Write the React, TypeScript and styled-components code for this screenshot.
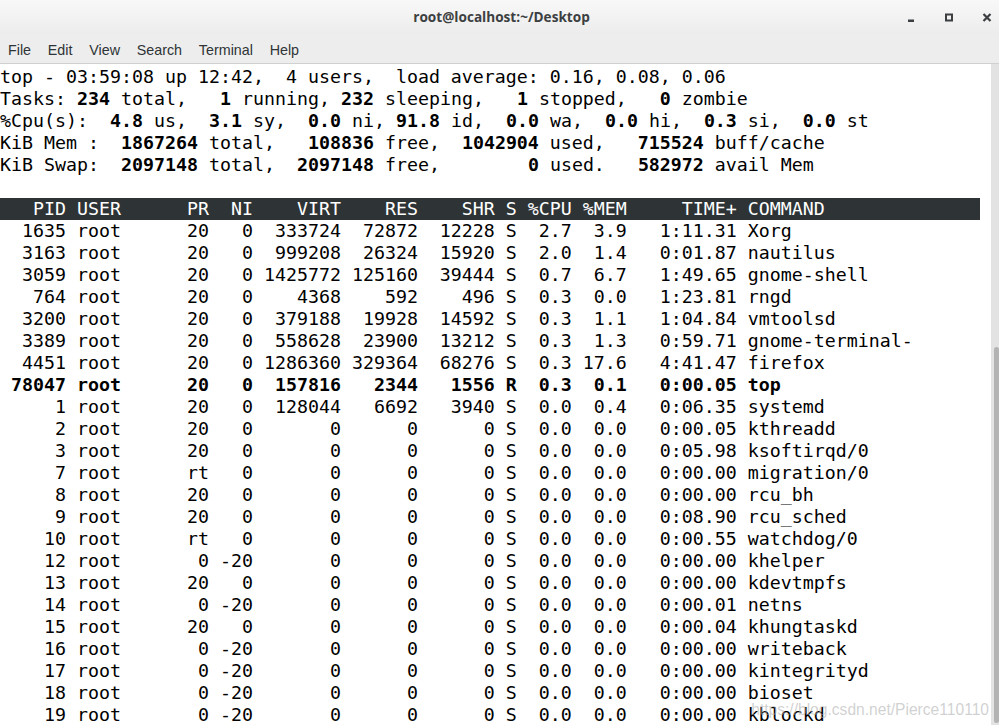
import * as React from "react";
import styled, { createGlobalStyle } from "styled-components";

const GlobalStyle = createGlobalStyle`
  html, body {
    margin: 0;
    padding: 0;
    background: #ffffff;
    overflow: hidden;
  }
`;

const Window = styled.div`
  position: relative;
  width: 999px;
  height: 725px;
  display: flex;
  flex-direction: column;
  overflow: hidden;
  background: #ffffff;
  font-family: "Open Sans", "DejaVu Sans", sans-serif;
`;

const TitleBar = styled.div`
  height: 35px;
  flex: none;
  display: grid;
  grid-template-columns: 1fr auto 1fr;
  align-items: center;
  padding-bottom: 2px;
  box-sizing: border-box;
  background: linear-gradient(#f8f8f8, #ececec);
`;

const Title = styled.div`
  grid-column: 2;
  font-size: 13.6px;
  font-weight: 700;
  color: #3c3f41;
  padding-left: 4px;
`;

const Controls = styled.div`
  grid-column: 3;
  justify-self: end;
  display: flex;
  align-items: center;
  gap: 24px;
  padding-right: 5px;
  padding-top: 2px;
`;

const ControlButton = styled.span`
  width: 14px;
  height: 14px;
  display: flex;
  color: #3c3f41;
`;

const MenuBar = styled.div`
  height: 29px;
  flex: none;
  display: flex;
  align-items: center;
  padding-top: 2px;
  box-sizing: border-box;
  background: #ededed;
  border-bottom: 1px solid #d0d0d0;
`;

const MenuItem = styled.span`
  padding: 0 8.4px;
  font-family: "Liberation Sans", Arial, sans-serif;
  font-size: 14.3px;
  color: #2e3436;
  &:first-child {
    padding-left: 8px;
  }
`;

const Terminal = styled.div`
  flex: 1;
  display: flex;
  min-height: 0;
`;

const Screen = styled.div`
  flex: 1;
  padding-top: 2px;
  font-family: "DejaVu Sans Mono", monospace;
  font-size: 18.27px;
  line-height: 22px;
  color: #000000;
`;

const Line = styled.div<{ $bold?: boolean; $inverse?: boolean }>`
  height: 22px;
  white-space: pre;
  font-weight: ${(p) => (p.$bold ? 700 : 400)};
  background: ${(p) => (p.$inverse ? "#2e3436" : "transparent")};
  color: ${(p) => (p.$inverse ? "#ffffff" : "inherit")};
  width: ${(p) => (p.$inverse ? "980px" : "auto")};
`;

const Strong = styled.b`
  font-weight: 700;
`;

const Trough = styled.div`
  width: 8px;
  flex: none;
  display: flex;
  flex-direction: column;
  justify-content: flex-end;
  padding-bottom: 2px;
  box-sizing: border-box;
  background: #e3e3e3;
`;

const Thumb = styled.div`
  height: 376px;
  width: 5px;
  margin-left: 3px;
  border-radius: 3px;
  background: #b3b3b3;
`;

const Watermark = styled.div`
  position: absolute;
  right: 10px;
  bottom: 6px;
  font-family: "Liberation Sans", Arial, sans-serif;
  font-size: 15.6px;
  color: rgba(170, 170, 170, 0.55);
  pointer-events: none;
`;

const menus = ["File", "Edit", "View", "Search", "Terminal", "Help"];

const summary = [
  "top - 03:59:08 up 12:42,  4 users,  load average: 0.16, 0.08, 0.06",
  "Tasks: **234** total,   **1** running, **232** sleeping,   **1** stopped,   **0** zombie",
  "%Cpu(s):  **4.8** us,  **3.1** sy,  **0.0** ni, **91.8** id,  **0.0** wa,  **0.0** hi,  **0.3** si,  **0.0** st",
  "KiB Mem :  **1867264** total,   **108836** free,  **1042904** used,   **715524** buff/cache",
  "KiB Swap:  **2097148** total,  **2097148** free,        **0** used.   **582972** avail Mem",
];

type Proc = [number, string, string, string, string, string, string, string, string, string, string];

const procs: Proc[] = [
  [1635, "20", "0", "333724", "72872", "12228", "S", "2.7", "3.9", "1:11.31", "Xorg"],
  [3163, "20", "0", "999208", "26324", "15920", "S", "2.0", "1.4", "0:01.87", "nautilus"],
  [3059, "20", "0", "1425772", "125160", "39444", "S", "0.7", "6.7", "1:49.65", "gnome-shell"],
  [764, "20", "0", "4368", "592", "496", "S", "0.3", "0.0", "1:23.81", "rngd"],
  [3200, "20", "0", "379188", "19928", "14592", "S", "0.3", "1.1", "1:04.84", "vmtoolsd"],
  [3389, "20", "0", "558628", "23900", "13212", "S", "0.3", "1.3", "0:59.71", "gnome-terminal-"],
  [4451, "20", "0", "1286360", "329364", "68276", "S", "0.3", "17.6", "4:41.47", "firefox"],
  [78047, "20", "0", "157816", "2344", "1556", "R", "0.3", "0.1", "0:00.05", "top"],
  [1, "20", "0", "128044", "6692", "3940", "S", "0.0", "0.4", "0:06.35", "systemd"],
  [2, "20", "0", "0", "0", "0", "S", "0.0", "0.0", "0:00.05", "kthreadd"],
  [3, "20", "0", "0", "0", "0", "S", "0.0", "0.0", "0:05.98", "ksoftirqd/0"],
  [7, "rt", "0", "0", "0", "0", "S", "0.0", "0.0", "0:00.00", "migration/0"],
  [8, "20", "0", "0", "0", "0", "S", "0.0", "0.0", "0:00.00", "rcu_bh"],
  [9, "20", "0", "0", "0", "0", "S", "0.0", "0.0", "0:08.90", "rcu_sched"],
  [10, "rt", "0", "0", "0", "0", "S", "0.0", "0.0", "0:00.55", "watchdog/0"],
  [12, "0", "-20", "0", "0", "0", "S", "0.0", "0.0", "0:00.00", "khelper"],
  [13, "20", "0", "0", "0", "0", "S", "0.0", "0.0", "0:00.00", "kdevtmpfs"],
  [14, "0", "-20", "0", "0", "0", "S", "0.0", "0.0", "0:00.01", "netns"],
  [15, "20", "0", "0", "0", "0", "S", "0.0", "0.0", "0:00.04", "khungtaskd"],
  [16, "0", "-20", "0", "0", "0", "S", "0.0", "0.0", "0:00.00", "writeback"],
  [17, "0", "-20", "0", "0", "0", "S", "0.0", "0.0", "0:00.00", "kintegrityd"],
  [18, "0", "-20", "0", "0", "0", "S", "0.0", "0.0", "0:00.00", "bioset"],
  [19, "0", "-20", "0", "0", "0", "S", "0.0", "0.0", "0:00.00", "kblockd"],
];

const r = (v: string | number, n: number) => String(v).padStart(n);

const row = (c: (string | number)[]) =>
  r(c[0], 6) + " " + String(c[1]).padEnd(8) + r(c[2], 4) + r(c[3], 4) + r(c[4], 8) +
  r(c[5], 7) + r(c[6], 7) + r(c[7], 2) + r(c[8], 5) + r(c[9], 5) + r(c[10], 10) + " " + c[11];

const header = row(["PID", "USER", "PR", "NI", "VIRT", "RES", "SHR", "S", "%CPU", "%MEM", "TIME+", "COMMAND"]).padEnd(89);

const Marked = ({ text }: { text: string }) => (
  <>
    {text.split("**").map((part, i) => (i % 2 ? <Strong key={i}>{part}</Strong> : part))}
  </>
);

const Minimize = () => (
  <svg width="14" height="14" viewBox="0 0 14 14">
    <rect x="4" y="8.5" width="6" height="2.5" fill="currentColor" />
  </svg>
);

const Maximize = () => (
  <svg width="14" height="14" viewBox="0 0 14 14">
    <rect x="4" y="3.5" width="6" height="6" fill="none" stroke="currentColor" strokeWidth="2" />
  </svg>
);

const Close = () => (
  <svg width="14" height="14" viewBox="0 0 14 14">
    <path d="M3.5 3 L10.5 10 M10.5 3 L3.5 10" stroke="currentColor" strokeWidth="2.2" />
  </svg>
);

const App = () => (
  <Window>
    <GlobalStyle />
    <TitleBar>
      <Title>root@localhost:~/Desktop</Title>
      <Controls>
        <ControlButton><Minimize /></ControlButton>
        <ControlButton><Maximize /></ControlButton>
        <ControlButton><Close /></ControlButton>
      </Controls>
    </TitleBar>
    <MenuBar>
      {menus.map((m) => (
        <MenuItem key={m}>{m}</MenuItem>
      ))}
    </MenuBar>
    <Terminal>
      <Screen>
        {summary.map((s, i) => (
          <Line key={i}>
            <Marked text={s} />
          </Line>
        ))}
        <Line> </Line>
        <Line $inverse>{header}</Line>
        {procs.map((p) => (
          <Line key={p[0]} $bold={p[0] === 78047}>
            {row([p[0], "root", ...p.slice(1)])}
          </Line>
        ))}
      </Screen>
      <Trough>
        <Thumb />
      </Trough>
    </Terminal>
    <Watermark>https://blog.csdn.net/Pierce110110</Watermark>
  </Window>
);

export default App;
